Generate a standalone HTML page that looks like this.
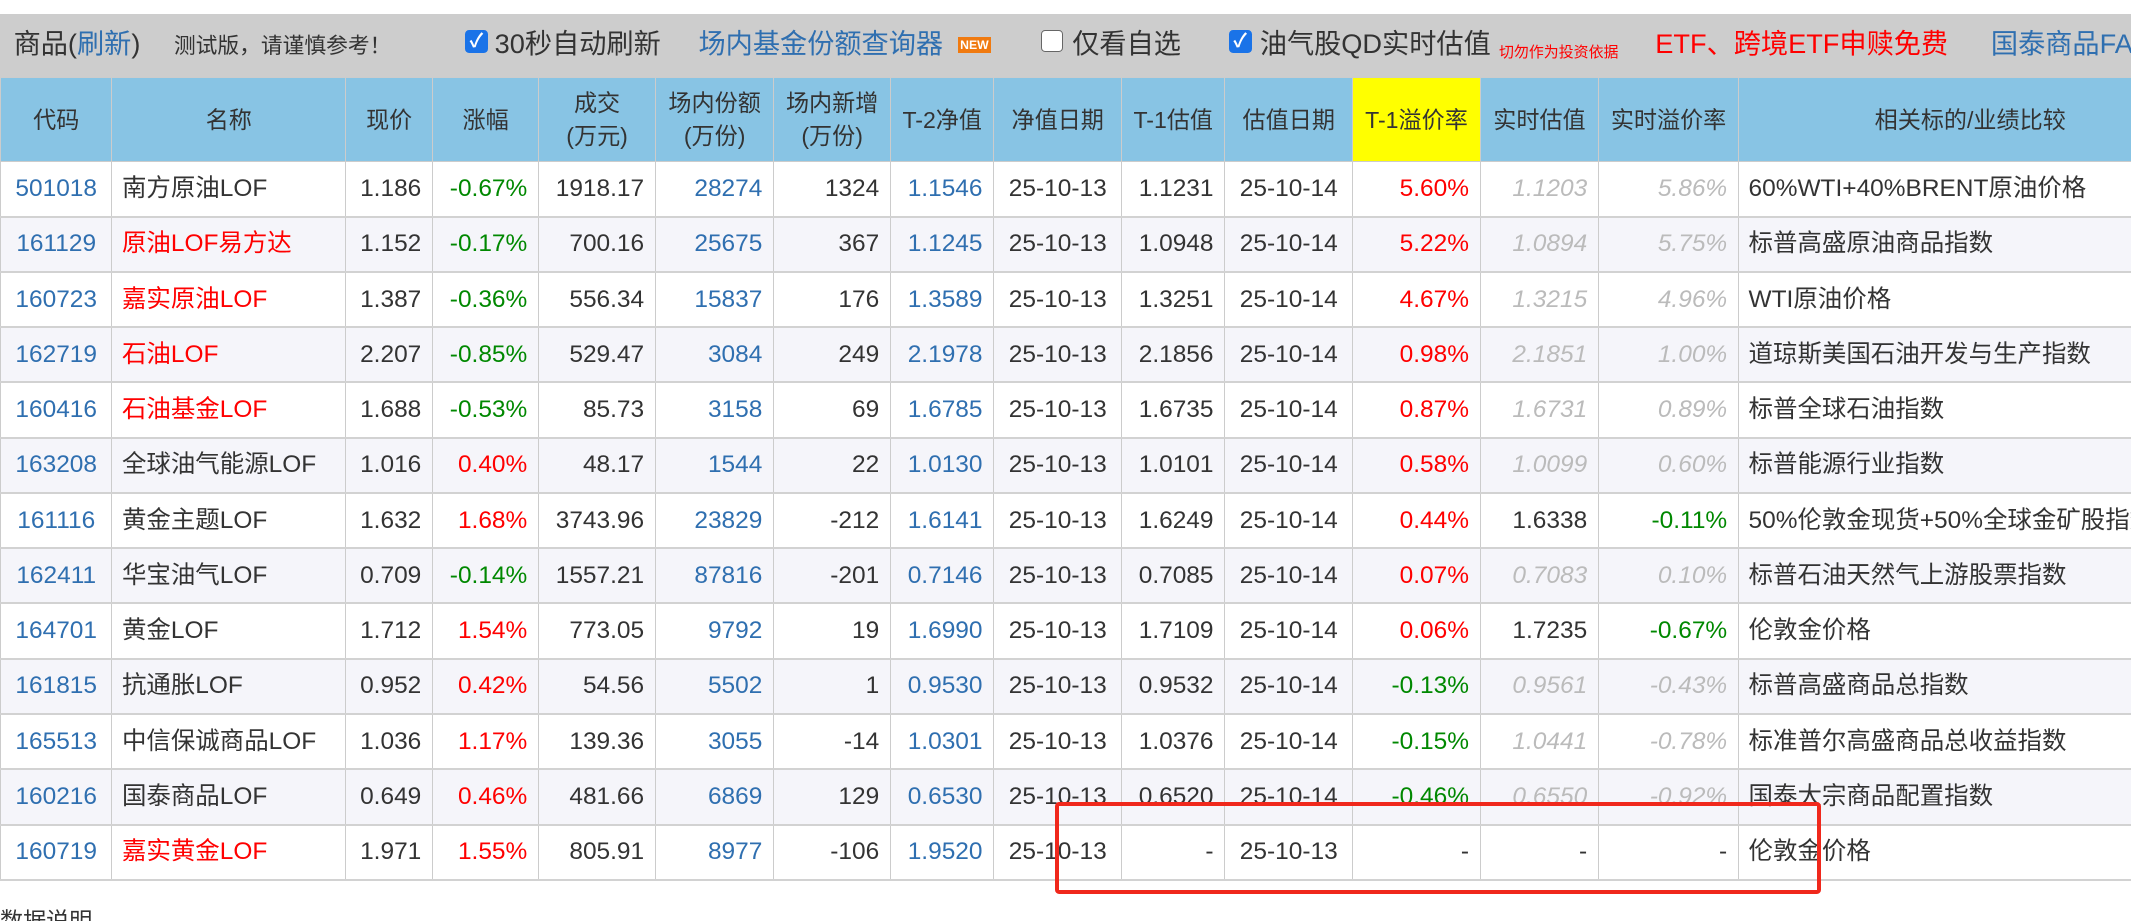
<!DOCTYPE html>
<html><head><meta charset="utf-8"><style>
html,body{margin:0;padding:0;background:#fff;overflow:hidden}
body{width:2131px;height:921px}
#w{zoom:1.359;width:1568px;height:678px;position:relative;overflow:hidden;font-family:"Liberation Sans","Noto Sans CJK SC",sans-serif;color:#333}
.bar{position:absolute;left:0;top:10px;width:1568px;height:47px;background:#cdcdcd;white-space:nowrap}
.bar span{position:absolute;top:11px;font-size:20px;line-height:22px}
.cb{position:absolute;top:12px;width:17px;height:17px;border-radius:3px;background:#1a73e8;color:#fff;font-size:14px;line-height:17px;text-align:center;font-weight:bold}
.cbo{position:absolute;top:12px;width:15px;height:15px;border-radius:3px;border:1px solid #666;background:#fff}
table{position:absolute;left:0;top:57px;border-collapse:collapse;table-layout:fixed;width:1620px}
th{background:#88c4e4;font-weight:normal;font-size:17px;height:61px;border:1px solid #ccc;padding:0;line-height:24px;color:#333}
td{height:39.2px;line-height:22px;vertical-align:middle;border-left:1px solid #ccc;border-right:1px solid #ccc;border-bottom:2px solid #d2d2d2;font-size:18px;padding:0 8px;white-space:nowrap;overflow:hidden}
tr:nth-child(odd) td{background:#f5f5fa}
tr:nth-child(even) td{background:#fff}
.c{text-align:center}.r{text-align:right}.l{text-align:left;padding-left:7px}
.b{color:#2f6fb0}.red{color:#f00}.g{color:#080}.gr{color:#bbb;font-style:italic}
.box{position:absolute;left:776px;top:590px;width:558px;height:62px;border:3px solid #f0281c;border-radius:3px}
</style></head><body><div id="w">
<div class="bar">
<span style="left:10px">商品(<span style="position:static;color:#2f6fb0">刷新</span>)</span>
<span style="left:128px;font-size:16px;top:13px">测试版，请谨慎参考！</span>
<div class="cb" style="left:342px">✓</div>
<span style="left:364px">30秒自动刷新</span>
<span style="left:514px;color:#2f6fb0">场内基金份额查询器</span>
<span style="left:705px;top:17px;width:24px;height:12px;background:#f07a10;color:#fff;font-size:9px;line-height:12px;font-weight:bold;text-align:center">NEW</span>
<div class="cbo" style="left:766px"></div>
<span style="left:789px">仅看自选</span>
<div class="cb" style="left:904px">✓</div>
<span style="left:927px">油气股QD实时估值</span>
<span style="left:1103px;top:18px;font-size:11px;color:#f00">切勿作为投资依据</span>
<span style="left:1218px;color:#f00">ETF、跨境ETF申赎免费</span>
<span style="left:1465px;color:#2f6fb0">国泰商品FAQ</span>
</div>
<table>
<colgroup><col style="width:82px"><col style="width:172px"><col style="width:64px"><col style="width:78px"><col style="width:86px"><col style="width:87px"><col style="width:86px"><col style="width:76px"><col style="width:94px"><col style="width:76px"><col style="width:94px"><col style="width:94px"><col style="width:87px"><col style="width:103px"><col style="width:341px"></colgroup>
<tr><th>代码</th><th>名称</th><th>现价</th><th>涨幅</th><th>成交<br>(万元)</th><th>场内份额<br>(万份)</th><th>场内新增<br>(万份)</th><th>T-2净值</th><th>净值日期</th><th>T-1估值</th><th>估值日期</th><th style="background:#ff0">T-1溢价率</th><th>实时估值</th><th>实时溢价率</th><th>相关标的/业绩比较</th></tr>
<tr><td class="c b">501018</td><td class="l">南方原油LOF</td><td class="r">1.186</td><td class="r g">-0.67%</td><td class="r">1918.17</td><td class="r b">28274</td><td class="r">1324</td><td class="r b">1.1546</td><td class="c">25-10-13</td><td class="r">1.1231</td><td class="c">25-10-14</td><td class="r red">5.60%</td><td class="r gr">1.1203</td><td class="r gr">5.86%</td><td class="l">60%WTI+40%BRENT原油价格</td></tr>
<tr><td class="c b">161129</td><td class="l red">原油LOF易方达</td><td class="r">1.152</td><td class="r g">-0.17%</td><td class="r">700.16</td><td class="r b">25675</td><td class="r">367</td><td class="r b">1.1245</td><td class="c">25-10-13</td><td class="r">1.0948</td><td class="c">25-10-14</td><td class="r red">5.22%</td><td class="r gr">1.0894</td><td class="r gr">5.75%</td><td class="l">标普高盛原油商品指数</td></tr>
<tr><td class="c b">160723</td><td class="l red">嘉实原油LOF</td><td class="r">1.387</td><td class="r g">-0.36%</td><td class="r">556.34</td><td class="r b">15837</td><td class="r">176</td><td class="r b">1.3589</td><td class="c">25-10-13</td><td class="r">1.3251</td><td class="c">25-10-14</td><td class="r red">4.67%</td><td class="r gr">1.3215</td><td class="r gr">4.96%</td><td class="l">WTI原油价格</td></tr>
<tr><td class="c b">162719</td><td class="l red">石油LOF</td><td class="r">2.207</td><td class="r g">-0.85%</td><td class="r">529.47</td><td class="r b">3084</td><td class="r">249</td><td class="r b">2.1978</td><td class="c">25-10-13</td><td class="r">2.1856</td><td class="c">25-10-14</td><td class="r red">0.98%</td><td class="r gr">2.1851</td><td class="r gr">1.00%</td><td class="l">道琼斯美国石油开发与生产指数</td></tr>
<tr><td class="c b">160416</td><td class="l red">石油基金LOF</td><td class="r">1.688</td><td class="r g">-0.53%</td><td class="r">85.73</td><td class="r b">3158</td><td class="r">69</td><td class="r b">1.6785</td><td class="c">25-10-13</td><td class="r">1.6735</td><td class="c">25-10-14</td><td class="r red">0.87%</td><td class="r gr">1.6731</td><td class="r gr">0.89%</td><td class="l">标普全球石油指数</td></tr>
<tr><td class="c b">163208</td><td class="l">全球油气能源LOF</td><td class="r">1.016</td><td class="r red">0.40%</td><td class="r">48.17</td><td class="r b">1544</td><td class="r">22</td><td class="r b">1.0130</td><td class="c">25-10-13</td><td class="r">1.0101</td><td class="c">25-10-14</td><td class="r red">0.58%</td><td class="r gr">1.0099</td><td class="r gr">0.60%</td><td class="l">标普能源行业指数</td></tr>
<tr><td class="c b">161116</td><td class="l">黄金主题LOF</td><td class="r">1.632</td><td class="r red">1.68%</td><td class="r">3743.96</td><td class="r b">23829</td><td class="r">-212</td><td class="r b">1.6141</td><td class="c">25-10-13</td><td class="r">1.6249</td><td class="c">25-10-14</td><td class="r red">0.44%</td><td class="r">1.6338</td><td class="r g">-0.11%</td><td class="l">50%伦敦金现货+50%全球金矿股指数</td></tr>
<tr><td class="c b">162411</td><td class="l">华宝油气LOF</td><td class="r">0.709</td><td class="r g">-0.14%</td><td class="r">1557.21</td><td class="r b">87816</td><td class="r">-201</td><td class="r b">0.7146</td><td class="c">25-10-13</td><td class="r">0.7085</td><td class="c">25-10-14</td><td class="r red">0.07%</td><td class="r gr">0.7083</td><td class="r gr">0.10%</td><td class="l">标普石油天然气上游股票指数</td></tr>
<tr><td class="c b">164701</td><td class="l">黄金LOF</td><td class="r">1.712</td><td class="r red">1.54%</td><td class="r">773.05</td><td class="r b">9792</td><td class="r">19</td><td class="r b">1.6990</td><td class="c">25-10-13</td><td class="r">1.7109</td><td class="c">25-10-14</td><td class="r red">0.06%</td><td class="r">1.7235</td><td class="r g">-0.67%</td><td class="l">伦敦金价格</td></tr>
<tr><td class="c b">161815</td><td class="l">抗通胀LOF</td><td class="r">0.952</td><td class="r red">0.42%</td><td class="r">54.56</td><td class="r b">5502</td><td class="r">1</td><td class="r b">0.9530</td><td class="c">25-10-13</td><td class="r">0.9532</td><td class="c">25-10-14</td><td class="r g">-0.13%</td><td class="r gr">0.9561</td><td class="r gr">-0.43%</td><td class="l">标普高盛商品总指数</td></tr>
<tr><td class="c b">165513</td><td class="l">中信保诚商品LOF</td><td class="r">1.036</td><td class="r red">1.17%</td><td class="r">139.36</td><td class="r b">3055</td><td class="r">-14</td><td class="r b">1.0301</td><td class="c">25-10-13</td><td class="r">1.0376</td><td class="c">25-10-14</td><td class="r g">-0.15%</td><td class="r gr">1.0441</td><td class="r gr">-0.78%</td><td class="l">标准普尔高盛商品总收益指数</td></tr>
<tr><td class="c b">160216</td><td class="l">国泰商品LOF</td><td class="r">0.649</td><td class="r red">0.46%</td><td class="r">481.66</td><td class="r b">6869</td><td class="r">129</td><td class="r b">0.6530</td><td class="c">25-10-13</td><td class="r">0.6520</td><td class="c">25-10-14</td><td class="r g">-0.46%</td><td class="r gr">0.6550</td><td class="r gr">-0.92%</td><td class="l">国泰大宗商品配置指数</td></tr>
<tr><td class="c b">160719</td><td class="l red">嘉实黄金LOF</td><td class="r">1.971</td><td class="r red">1.55%</td><td class="r">805.91</td><td class="r b">8977</td><td class="r">-106</td><td class="r b">1.9520</td><td class="c">25-10-13</td><td class="r">-</td><td class="c">25-10-13</td><td class="r">-</td><td class="r">-</td><td class="r">-</td><td class="l">伦敦金价格</td></tr>
</table>
<div class="box"></div>
<div style="position:absolute;left:0;top:664px;font-size:17px;color:#333">数据说明</div>
</div></body></html>
